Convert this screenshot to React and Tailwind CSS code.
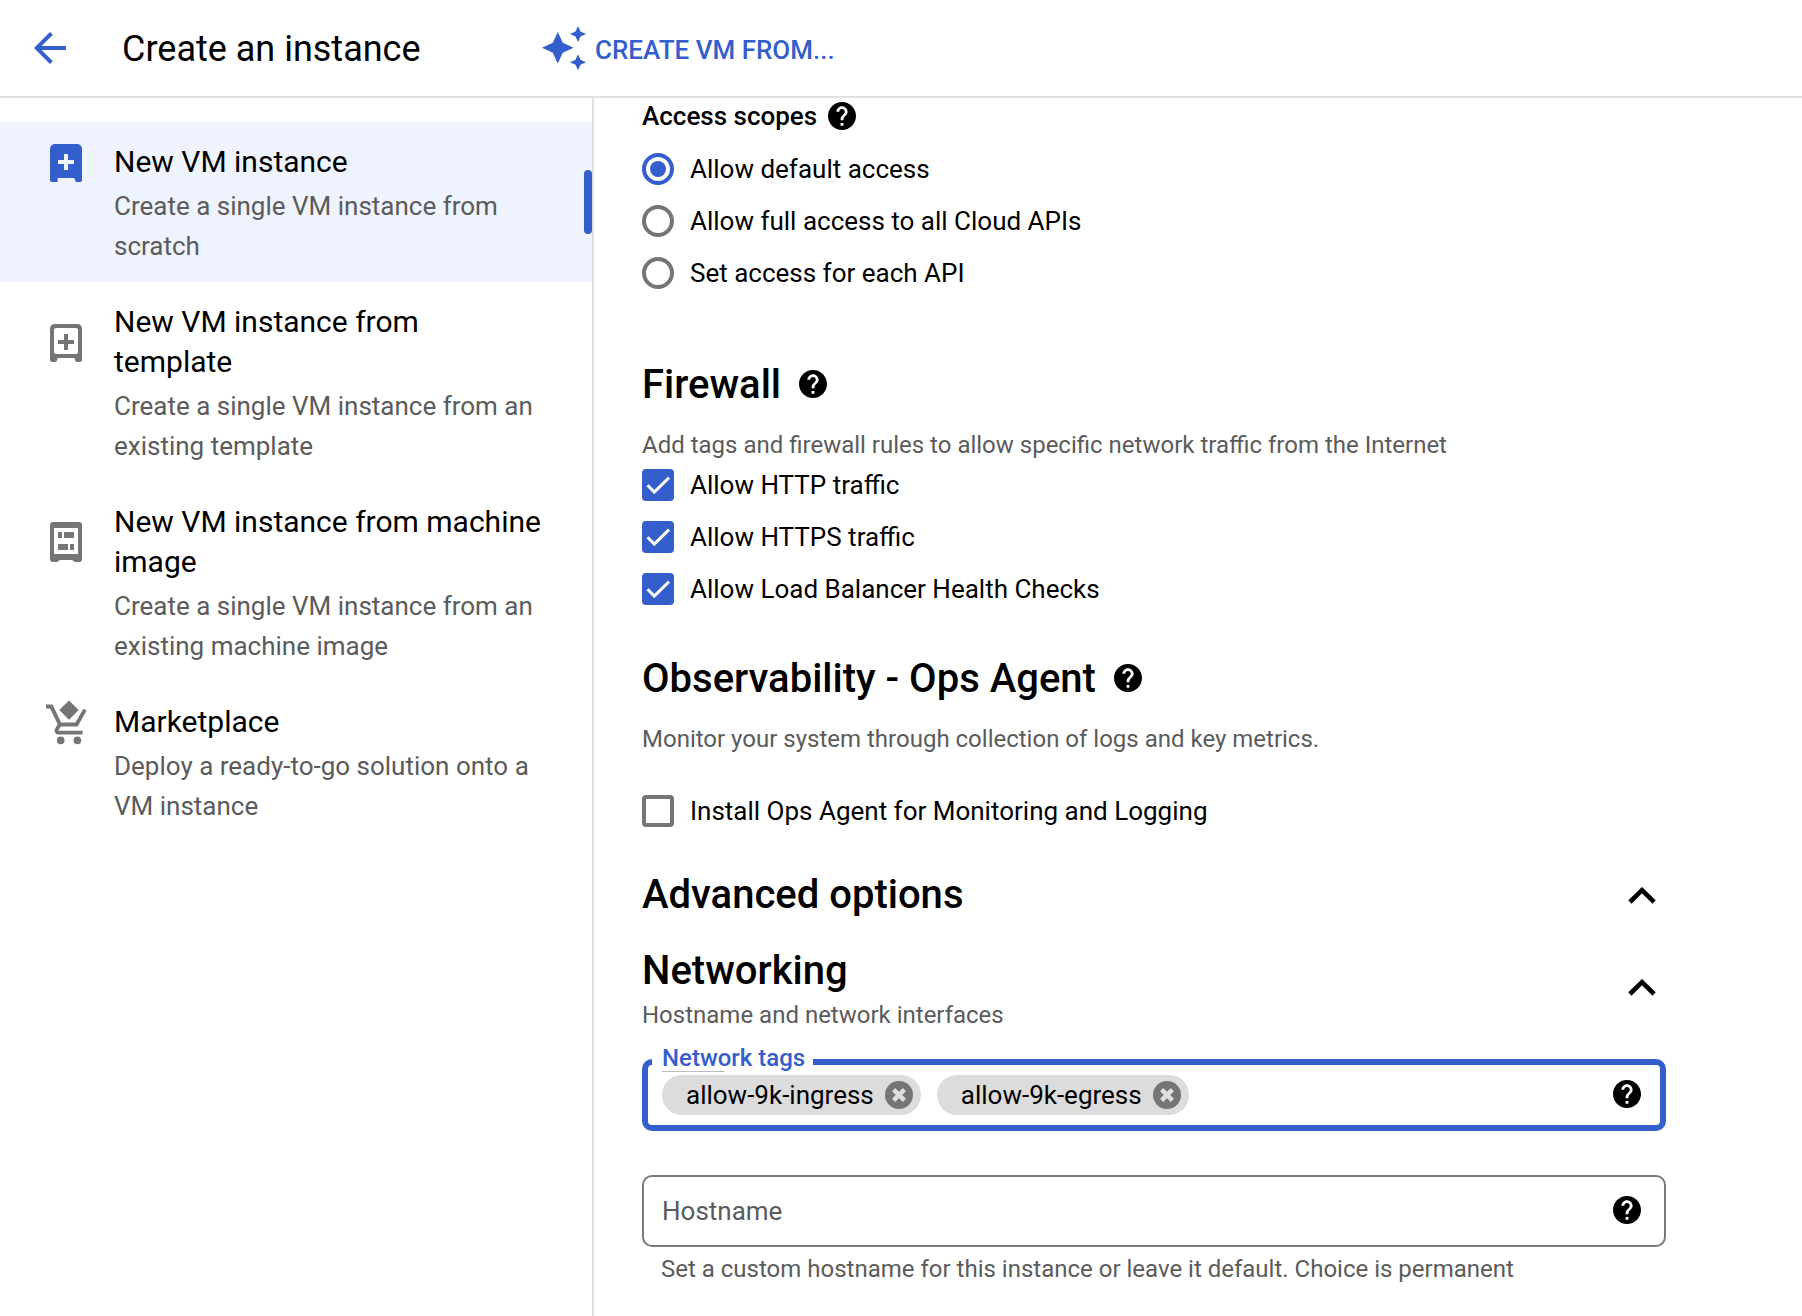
import React from "react";

function ArrowBack() {
  return (
    <svg className="size-12 shrink-0" viewBox="0 0 24 24" fill="#335ecb">
      <path d="M20 11H7.830l5.590-5.590L12 4l-8 8 8 8 1.410-1.410L7.830 13H20v-2z" />
    </svg>
  );
}

function Sparkles() {
  return (
    <svg className="size-11 shrink-0" viewBox="0 0 44 44" fill="#335ecb">
      <path d="M15.800 6l5 10.800 10.800 5-10.800 5-5 10.800-5-10.800-10.800-5 10.800-5z" />
      <path d="M36 0l2.500 5.500 5.500 2.500-5.500 2.500-2.500 5.500-2.500-5.500-5.500-2.500 5.500-2.500z" />
      <path d="M36 28.200l2.500 5.500 5.500 2.500-5.500 2.500-2.500 5.500-2.500-5.500-5.500-2.500 5.500-2.500z" />
    </svg>
  );
}

function Help({ className = "" }) {
  return (
    <svg className={`size-7 shrink-0 ${className}`} viewBox="2 2 20 20" fill="#000">
      <path d="M12 2C6.48 2 2 6.48 2 12s4.48 10 10 10 10-4.48 10-10S17.52 2 12 2zm1 17h-2v-2h2v2zm2.07-7.75l-.9.92C13.45 12.9 13 13.5 13 15h-2v-.5c0-1.1.45-2.1 1.17-2.83l1.24-1.26c.37-.36.59-.86.59-1.41 0-1.1-.9-2-2-2s-2 .9-2 2H8c0-2.21 1.79-4 4-4s4 1.79 4 4c0 .88-.36 1.68-.93 2.25z" />
    </svg>
  );
}

function VmFilled() {
  return (
    <svg className="size-12" viewBox="0 0 48 48">
      <path
        fill="#335ecb"
        fillRule="evenodd"
        d="M13 6h22a5 5 0 0 1 5 5v31a2 2 0 0 1-2 2h-3a2 2 0 0 1-2-2l-.6-2H15.600v4H10a2 2 0 0 1-2-2V11a5 5 0 0 1 5-5zM22 16v6h-6v4h6v6h4v-6h6v-4h-6v-6z"
      />
    </svg>
  );
}

function VmTemplate() {
  return (
    <svg className="size-12" viewBox="0 0 48 48">
      <path
        fill="#757575"
        fillRule="evenodd"
        d="M12.500 6h23a4.500 4.500 0 0 1 4.500 4.500V42a2 2 0 0 1-2 2h-3a2 2 0 0 1-2-2l-.6-2H15.600l-.6 2a2 2 0 0 1-2 2h-3a2 2 0 0 1-2-2V10.500A4.500 4.500 0 0 1 12.500 6zM14 10a2 2 0 0 0-2 2v22a2 2 0 0 0 2 2h20a2 2 0 0 0 2-2V12a2 2 0 0 0-2-2zM22 16v6h-6v4h6v6h4v-6h6v-4h-6v-6z"
      />
    </svg>
  );
}

function VmImage() {
  return (
    <svg className="size-12" viewBox="0 0 48 48" fill="#757575">
      <path
        fillRule="evenodd"
        d="M11 4h26a3 3 0 0 1 3 3v34a3 3 0 0 1-3 3h-3.500c-1.500 0-2.500-2-4-2h-11c-1.500 0-2.500 2-4 2H11a3 3 0 0 1-3-3V7a3 3 0 0 1 3-3zM12 10v26h24V10z"
      />
      <path d="M16 14h4v6h-4zM22 14h10v6H22zM16 26h10v6H16zM28 26h4v6h-4z" />
    </svg>
  );
}

function Cart() {
  return (
    <svg className="size-12" viewBox="0 0 48 48">
      <path
        fill="none"
        stroke="#757575"
        strokeWidth="3.8"
        d="M4 8.500h5.300L18 26.500h16.500L43 11.600M18 26l-3.300 5.600c-.8 1.500 0 3 1.600 3H40.600"
      />
      <path fill="#757575" d="M27 2.400l9.700 9.700-9.700 9.700-9.700-9.700z" />
      <circle cx="18.700" cy="42.400" r="3.800" fill="#757575" />
      <circle cx="35.400" cy="42.400" r="3.800" fill="#757575" />
    </svg>
  );
}

function NavItem({ icon, title, text, selected }) {
  return (
    <li className={`flex pb-4 pl-[42px] pt-5 ${selected ? "relative bg-[#eff3fd]" : ""}`}>
      <div className="flex flex-col">
        <div className="grid grid-cols-[72px_440px] items-center">
          <div className="-my-1 flex">{icon}</div>
          <div className="whitespace-pre-line text-[30px] leading-[40px] text-black">{title}</div>
        </div>
        <div className="mt-1 whitespace-pre-line pl-[72px] text-[26px] leading-[40px] text-[#5b5b5b]">{text}</div>
      </div>
      {selected && <span className="absolute right-0 top-12 h-16 w-2 rounded bg-[#335ecb]" />}
    </li>
  );
}

function Radio({ label, checked }) {
  return (
    <label className="flex h-[52px] items-center gap-4 text-[26px]">
      <span
        className={`flex size-8 items-center justify-center rounded-full border-4 ${
          checked ? "border-[#335ecb]" : "border-[#757575]"
        }`}
      >
        {checked && <span className="size-4 rounded-full bg-[#335ecb]" />}
      </span>
      {label}
    </label>
  );
}

function Checkbox({ label, checked }) {
  return (
    <label className="flex h-[52px] items-center gap-4 text-[26px]">
      {checked ? (
        <span className="size-8 rounded bg-[#335ecb]">
          <svg viewBox="0 0 32 32" className="size-8" fill="none" stroke="#fff" strokeWidth="3">
            <path d="M5.600 16.200l6.700 6.900L27 8.600" />
          </svg>
        </span>
      ) : (
        <span className="size-8 rounded border-4 border-[#757575]" />
      )}
      {label}
    </label>
  );
}

function Heading({ children }) {
  return <h2 className="h-12 text-[40px] font-medium leading-[50px]">{children}</h2>;
}

function Hint({ children, className = "" }) {
  return <p className={`text-[24px] leading-[32px] text-[#5b5b5b] ${className}`}>{children}</p>;
}

function Chevron() {
  return (
    <svg className="h-[18px] w-7" viewBox="0 0 28 18" fill="none" stroke="#000" strokeWidth="4.600">
      <path d="M1.900 15l12.100-11.800 12.100 11.800" />
    </svg>
  );
}

function Chip({ label }) {
  return (
    <span className="flex h-10 items-center rounded-full bg-[#dcdcdc] pl-6 pr-2 text-[26px] leading-[40px]">
      {label}
      <svg className="ml-[11px] size-7" viewBox="0 0 28 28">
        <circle cx="14" cy="14" r="14" fill="#757575" />
        <path d="M8.600 8.600l10.800 10.800M19.400 8.600L8.600 19.400" stroke="#e0e0e0" strokeWidth="4.400" />
      </svg>
    </span>
  );
}

export default function App() {
  return (
    <div className="flex h-[1316px] w-[1802px] flex-col overflow-hidden bg-white font-['Roboto',sans-serif] text-black">
      <header className="flex h-[98px] shrink-0 items-center border-b-2 border-[#e0e0e0] pl-[26px]">
        <ArrowBack />
        <h1 className="ml-12 w-[420px] pt-0.5 text-[36px] leading-[48px]">Create an instance</h1>
        <button className="flex items-center gap-[9px] text-[26px] font-medium leading-[40px] text-[#335ecb]">
          <Sparkles />
          <span className="pt-1">CREATE VM FROM...</span>
        </button>
      </header>

      <div className="flex min-h-0 flex-1">
        <nav className="w-[594px] shrink-0 border-r-2 border-[#e0e0e0] pt-6">
          <ul>
            <NavItem
              selected
              icon={<VmFilled />}
              title="New VM instance"
              text={"Create a single VM instance from\nscratch"}
            />
            <NavItem
              icon={<VmTemplate />}
              title={"New VM instance from\ntemplate"}
              text={"Create a single VM instance from an\nexisting template"}
            />
            <NavItem
              icon={<VmImage />}
              title={"New VM instance from machine\nimage"}
              text={"Create a single VM instance from an\nexisting machine image"}
            />
            <NavItem
              icon={<Cart />}
              title="Marketplace"
              text={"Deploy a ready-to-go solution onto a\nVM instance"}
            />
          </ul>
        </nav>

        <main className="ml-12 w-[1024px]">
          <div className="flex h-9 items-center text-[26px] font-medium">
            Access scopes
            <Help className="ml-[11px]" />
          </div>
          <div className="mt-[9px]">
            <Radio checked label="Allow default access" />
            <Radio label="Allow full access to all Cloud APIs" />
            <Radio label="Set access for each API" />
          </div>

          <div className="mt-[61px] flex items-center gap-[18px]">
            <Heading>Firewall</Heading>
            <Help />
          </div>
          <Hint className="mt-[21px]">
            Add tags and firewall rules to allow specific network traffic from the Internet
          </Hint>
          <div className="-mt-0.5">
            <Checkbox checked label="Allow HTTP traffic" />
            <Checkbox checked label="Allow HTTPS traffic" />
            <Checkbox checked label="Allow Load Balancer Health Checks" />
          </div>

          <div className="mt-[39px] flex items-center gap-[18px]">
            <Heading>Observability - Ops Agent</Heading>
            <Help />
          </div>
          <Hint className="mt-[21px]">Monitor your system through collection of logs and key metrics.</Hint>
          <div className="mt-[30px]">
            <Checkbox label="Install Ops Agent for Monitoring and Logging" />
          </div>

          <div className="mt-[33px] flex items-center justify-between pr-2.5">
            <Heading>Advanced options</Heading>
            <div className="pt-1">
              <Chevron />
            </div>
          </div>

          <div className="mt-7 flex items-center justify-between pr-2.5">
            <div>
              <Heading>Networking</Heading>
              <Hint className="mt-[5px]">Hostname and network interfaces</Hint>
            </div>
            <div className="pb-px">
              <Chevron />
            </div>
          </div>

          <div className="relative mt-7 flex h-[72px] items-center gap-4 rounded-[10px] border-[6px] border-[#335ecb] pl-3.5 pr-[19px]">
            <span className="absolute -top-[22px] left-1 h-7 w-[161px] bg-white pl-[10px] text-[24px] font-medium leading-[30px] text-[#335ecb]">
              Network tags
            </span>
            <span className="absolute left-3.5 top-1.5 h-px w-[63px] bg-[#bdbdbd]" />
            <Chip label="allow-9k-ingress" />
            <Chip label="allow-9k-egress" />
            <Help className="mb-0.5 ml-auto" />
          </div>

          <div className="mt-11 flex h-[72px] items-center justify-between rounded-[10px] border-2 border-[#757c81] pl-[18px] pr-[23px] text-[26px] text-[#5b5b5b]">
            Hostname
            <Help className="mb-0.5" />
          </div>
          <Hint className="mt-1.5 pl-[19px]">
            Set a custom hostname for this instance or leave it default. Choice is permanent
          </Hint>
        </main>
      </div>
    </div>
  );
}
